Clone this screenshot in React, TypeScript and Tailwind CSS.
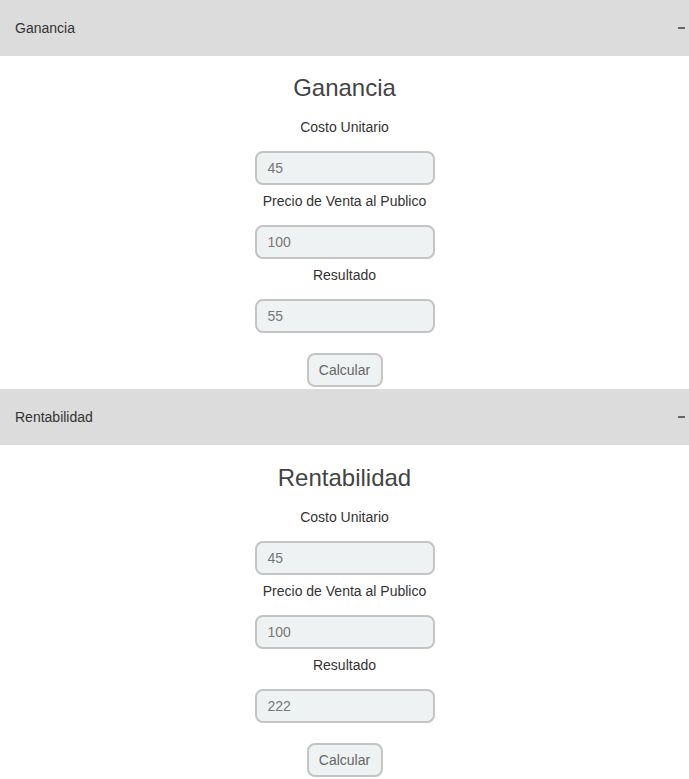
import React from "react";

const font = { fontFamily: '"Liberation Sans", Arial, sans-serif' };

function Field({ label, value }: { label: string; value: string }) {
  return (
    <>
      <label className="block h-5 text-[14px] leading-5 text-[#333]">{label}</label>
      <div className="mt-[14px] mb-[6px] flex h-[34px] w-[180px] items-center rounded-[8px] border-2 border-[#c4c4c4] bg-[#eff2f3] pl-[11px] text-left text-[14px] text-[#777]">
        {value}
      </div>
    </>
  );
}

function Section({ title, values, extraTop }: { title: string; values: string[]; extraTop: boolean }) {
  return (
    <section>
      <div className="flex h-14 items-center justify-between bg-[#dcdcdc] pl-[15px] pr-[4px] text-[14px] text-[#333]">
        <span>{title}</span>
        <span className="mb-[1px] block h-[2px] w-[7px] bg-[#666]" />
      </div>
      <div className={`flex flex-col items-center ${extraTop ? "pt-[15px]" : "pt-[14px]"} pb-[2px]`}>
        <h2 className="h-[36px] text-[24px] leading-[36px] text-[#444]">{title}</h2>
        <div className="h-[11px]" />
        <Field label="Costo Unitario" value={values[0]} />
        <Field label="Precio de Venta al Publico" value={values[1]} />
        <Field label="Resultado" value={values[2]} />
        <button className="mt-[14px] h-[34px] w-[76px] rounded-[8px] border-2 border-[#c4c4c4] bg-[#eff2f3] text-[14px] text-[#666]">
          Calcular
        </button>
      </div>
    </section>
  );
}

export default function App() {
  return (
    <div className="w-[689px] bg-white" style={font}>
      <Section title="Ganancia" values={["45", "100", "55"]} extraTop={false} />
      <Section title="Rentabilidad" values={["45", "100", "222"]} extraTop={true} />
    </div>
  );
}
